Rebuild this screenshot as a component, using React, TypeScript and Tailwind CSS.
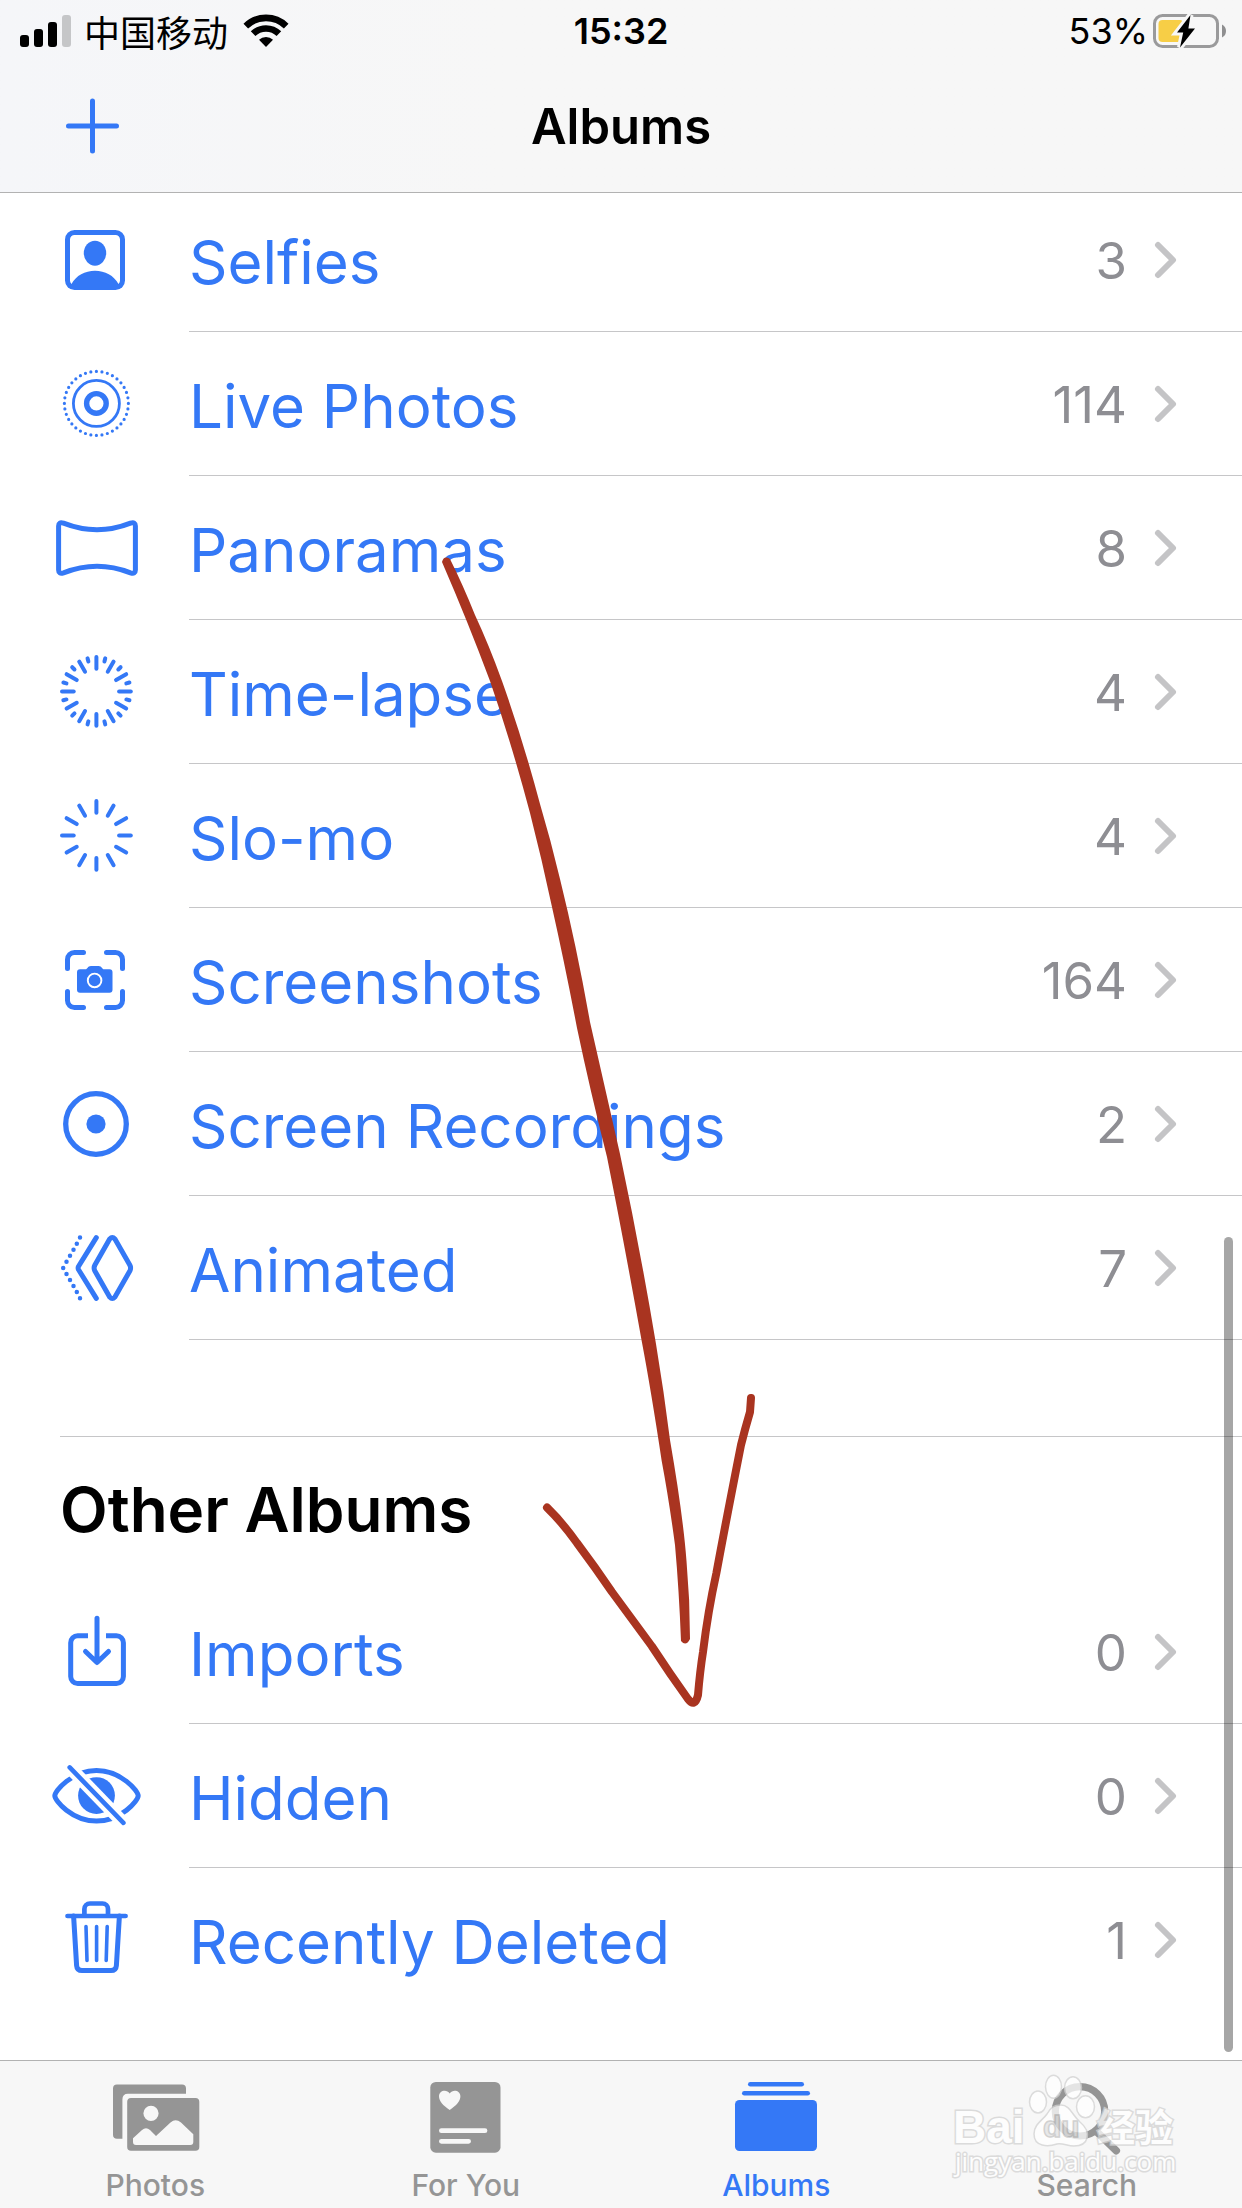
import type { ReactNode } from 'react';
import clsx from 'clsx';

interface Album {
  name: string;
  count: number;
  icon: ReactNode;
}

const LONG_TICKS = [0, 30, 60, 90, 120, 150, 180, 210, 240, 270, 300, 330];
const SHORT_TICKS = LONG_TICKS.map((angle) => angle + 15);

function Glyph({ children }: { children: ReactNode }) {
  return (
    <svg
      viewBox="0 0 96 96"
      className="size-24 shrink-0"
      fill="none"
      stroke="currentColor"
      strokeWidth="5"
      strokeLinecap="round"
      strokeLinejoin="round"
      aria-hidden="true"
    >
      {children}
    </svg>
  );
}

function Ticks({ angles, from, to }: { angles: number[]; from: number; to: number }) {
  return (
    <g strokeWidth="4">
      {angles.map((angle) => (
        <path
          key={angle}
          d={`M48.4 ${47.4 - from}V${47.4 - to}`}
          transform={`rotate(${angle} 48.4 47.4)`}
        />
      ))}
    </g>
  );
}

const mediaTypes: Album[] = [
  {
    name: 'Selfies',
    count: 3,
    icon: (
      <Glyph>
        <rect x="19.5" y="20.5" width="55" height="55" rx="7" />
        <g fill="currentColor" stroke="none">
          <ellipse cx="47" cy="41.2" rx="11.2" ry="12.5" />
          <path d="M23.5 72C28 63.5 37 58.7 47 58.7S66 63.5 70.5 72L74 76H20Z" />
        </g>
      </Glyph>
    ),
  },
  {
    name: 'Live Photos',
    count: 114,
    icon: (
      <Glyph>
        <circle cx="48.4" cy="47.4" r="32" strokeWidth="3.2" pathLength="36" strokeDasharray="0 1" />
        <circle cx="48.4" cy="47.4" r="23" strokeWidth="2.8" />
        <circle cx="48.4" cy="47.4" r="9.8" strokeWidth="5.4" />
      </Glyph>
    ),
  },
  {
    name: 'Panoramas',
    count: 8,
    icon: (
      <Glyph>
        <path d="M15.5 23.2C26 27.3 36 29.8 49 29.8S72 27.3 82.5 23.2Q87.4 21.5 87.4 26V70Q87.4 74.5 82.5 72.8C72 68.7 62 66.2 49 66.2S26 68.7 15.5 72.8Q10.6 74.5 10.6 70V26Q10.6 21.5 15.5 23.2Z" />
      </Glyph>
    ),
  },
  {
    name: 'Time-lapse',
    count: 4,
    icon: (
      <Glyph>
        <Ticks angles={LONG_TICKS} from={22.7} to={34.4} />
        <Ticks angles={SHORT_TICKS} from={31} to={34.2} />
      </Glyph>
    ),
  },
  {
    name: 'Slo-mo',
    count: 4,
    icon: (
      <Glyph>
        <Ticks angles={LONG_TICKS} from={22.7} to={34.4} />
      </Glyph>
    ),
  },
  {
    name: 'Screenshots',
    count: 164,
    icon: (
      <Glyph>
        <path d="M19.5 36.5V27.5a7 7 0 0 1 7-7H35.5M58.5 20.5H67.5a7 7 0 0 1 7 7V36.5M74.5 59.5V68.5a7 7 0 0 1-7 7H58.5M35.5 75.5H26.5a7 7 0 0 1-7-7V59.5" />
        <path
          d="M32 37.3H37.5C39.5 37.3 39.5 34 43 34H50.5C54 34 54 37.3 56 37.3H61.5a3 3 0 0 1 3 3V57.7a3 3 0 0 1-3 3H32a3 3 0 0 1-3-3V40.3a3 3 0 0 1 3-3Z"
          fill="currentColor"
          stroke="none"
        />
        <circle cx="46.6" cy="48.4" r="6.8" stroke="#fff" strokeWidth="1.9" />
      </Glyph>
    ),
  },
  {
    name: 'Screen Recordings',
    count: 2,
    icon: (
      <Glyph>
        <circle cx="48" cy="48" r="30.3" strokeWidth="5.3" />
        <circle cx="48" cy="48" r="9.6" fill="currentColor" stroke="none" />
      </Glyph>
    ),
  },
  {
    name: 'Animated',
    count: 7,
    icon: (
      <Glyph>
        <path d="M61.8 18.8Q64.3 16 66.8 18.8L81.8 45Q83.4 48 81.8 51L66.8 77.2Q64.3 80 61.8 77.2L46.9 51Q45.3 48 46.9 45Z" />
        <path d="M48.3 17.6L30.6 46.2Q29.6 48 30.6 49.8L48.3 78.4" />
        <path
          d="M32 17.6h0M28.8 23.7h0M25.5 29.8h0M22 35.8h0M18.5 41.8h0M15.2 47.9h0M18.5 54h0M22 60h0M25.5 66h0M28.8 72h0M32 78.2h0"
          strokeWidth="4.5"
        />
      </Glyph>
    ),
  },
];

const otherAlbums: Album[] = [
  {
    name: 'Imports',
    count: 0,
    icon: (
      <Glyph>
        <path
          d="M40 31.8H29.7a7 7 0 0 0-7 7V72.5a7 7 0 0 0 7 7H68.4a7 7 0 0 0 7-7V38.8a7 7 0 0 0-7-7H58"
          strokeLinecap="butt"
        />
        <path d="M49 14.2V57.5M37.5 47.5L49 58.5L60.5 47.5" />
      </Glyph>
    ),
  },
  {
    name: 'Hidden',
    count: 0,
    icon: (
      <Glyph>
        <path d="M6.8 47.8C6.8 43 24 22.5 48.5 22.5S90.2 43 90.2 47.8S73 73.1 48.5 73.1S6.8 52.6 6.8 47.8Z" />
        <circle cx="48.5" cy="47.6" r="18.4" fill="currentColor" stroke="none" />
        <path d="M21 18.7L76 75.5" stroke="#fff" strokeWidth="13" strokeLinecap="butt" />
        <path d="M21.7 19.4L75.4 74.9" strokeWidth="4.6" />
      </Glyph>
    ),
  },
  {
    name: 'Recently Deleted',
    count: 1,
    icon: (
      <Glyph>
        <path d="M19.5 24H77.6M36.4 24V17a5.5 5.5 0 0 1 5.5-5.5H54.5a5.5 5.5 0 0 1 5.5 5.5V24" strokeWidth="4.7" />
        <path d="M25.6 24L28.6 73.5Q29 78.6 34 78.6H63Q68 78.6 68.4 73.5L71.4 24" />
        <path d="M38 34.5L39 68.5M48.6 34.5V68.5M59.2 34.5L58.2 68.5" strokeWidth="3.6" />
      </Glyph>
    ),
  },
];

const tabs = [
  {
    label: 'Photos',
    icon: (
      <>
        <path d="M6 62V15.5A4 4 0 0 1 10 11.5H75A4 4 0 0 1 79 15.5V20.7H21Q15.4 20.7 15.4 26.5V65.8H10A4 4 0 0 1 6 62Z" />
        <path
          fillRule="evenodd"
          d="M24 25H88.5a3.8 3.8 0 0 1 3.8 3.8V74a3.8 3.8 0 0 1-3.8 3.8H24a3.8 3.8 0 0 1-3.8-3.8V28.8A3.8 3.8 0 0 1 24 25ZM44 32.7a7.6 7.6 0 1 0 0 15.2a7.6 7.6 0 0 0 0-15.2ZM26 65.3V69Q26 72 29 72H83.3Q86.3 72 86.3 69V61.3L74 49.5Q68.5 45 63.5 49.5L49 62.9L43 57Q39 53.5 35 57Z"
        />
      </>
    ),
  },
  {
    label: 'For You',
    icon: (
      <>
        <rect x="12.3" y="9" width="70.2" height="70.7" rx="5.5" />
        <path
          fill="#f7f7f7"
          d="M31.7 37C25 32.5 21 28 21 23.3C21 17.5 28.5 15.8 31.7 20.5C34.9 15.8 42.4 17.5 42.4 23.3C42.4 28 38.4 32.5 31.7 37Z"
        />
        <path d="M23.4 57.7H67M23.4 68.3H50.6" stroke="#f7f7f7" strokeWidth="4.8" strokeLinecap="round" />
      </>
    ),
  },
  {
    label: 'Albums',
    current: true,
    icon: (
      <>
        <rect x="7" y="27" width="82" height="51" rx="4.5" />
        <rect x="14" y="18" width="68" height="4.6" rx="2.3" />
        <rect x="20" y="9" width="56" height="4.6" rx="2.3" />
      </>
    ),
  },
  {
    label: 'Search',
    icon: (
      <g fill="none" stroke="currentColor" strokeLinecap="round">
        <circle cx="41" cy="38.3" r="24.7" strokeWidth="7.2" />
        <path d="M59 60L77.3 77.7" strokeWidth="7.5" />
      </g>
    ),
  },
];

function StatusBar() {
  return (
    <div className="grid h-15 grid-cols-3 items-center pt-0.5 text-4xl">
      <div className="flex items-center pl-5">
        <svg viewBox="0 0 52 34" className="h-[34px] w-[52px]" aria-hidden="true">
          <rect y="21" width="9" height="12" rx="3" />
          <rect x="14" y="15" width="9" height="18" rx="3" />
          <rect x="28" y="8" width="9" height="25" rx="3" />
          <rect x="42" y="1" width="9" height="32" rx="3" fill="#c5c6c8" />
        </svg>
        <span className="ml-3 font-['Noto_Sans_CJK_SC',sans-serif] leading-10">中国移动</span>
        <svg viewBox="0 0 52 40" className="ml-3 h-10 w-[52px]" aria-label="Wi-Fi">
          <g fill="none" stroke="currentColor" strokeWidth="6.6">
            <path d="M5.8 15.1A29 29 0 0 1 46.2 15.1" />
            <path d="M13.1 22.7A18.5 18.5 0 0 1 38.9 22.7" />
          </g>
          <path d="M26 36L19 28.8A10 10 0 0 1 33 28.8Z" />
        </svg>
      </div>
      <time className="text-center font-semibold">15:32</time>
      <div className="flex items-center justify-end pr-3.5">
        <span>53%</span>
        <svg viewBox="0 0 78 40" className="ml-0.5 h-10 w-[78px]" aria-label="Charging">
          <rect x="4.5" y="4.5" width="63" height="31" rx="8" fill="none" stroke="#9a9a9b" strokeWidth="3" />
          <path d="M72 13.5Q76 15.5 76 20T72 26.5Z" fill="#8f8f90" />
          <rect x="8.5" y="9" width="25" height="22" rx="4" fill="#f7ce46" />
          <path
            d="M40.5 4L27 21.5H33.2L30 36.5L45 17.5H38.4Z"
            stroke="#f7f7f7"
            strokeWidth="6"
          />
          <path d="M40.5 4L27 21.5H33.2L30 36.5L45 17.5H38.4Z" />
        </svg>
      </div>
    </div>
  );
}

function AlbumList({ albums, lastDivider = false }: { albums: Album[]; lastDivider?: boolean }) {
  return (
    <ul>
      {albums.map((album, index) => (
        <li key={album.name}>
          <a href="#album" className="flex h-36 items-center pl-12 text-[#3478f6]">
            {album.icon}
            <div
              className={clsx(
                'ml-[45px] flex h-full flex-1 items-center border-b pr-[62px]',
                lastDivider || index < albums.length - 1 ? 'border-[#c6c6c8]' : 'border-transparent',
              )}
            >
              <span className="flex-1 pt-1 text-6xl leading-none">{album.name}</span>
              <span className="pt-0.5 text-[51px] leading-none text-[#8e8e93]">{album.count}</span>
              <svg viewBox="0 0 28 40" className="ml-[25px] h-10 w-7" aria-hidden="true">
                <path
                  d="M6 5L21 20L6 35"
                  fill="none"
                  stroke="#c4c4c6"
                  strokeWidth="6"
                  strokeLinecap="round"
                  strokeLinejoin="round"
                />
              </svg>
            </div>
          </a>
        </li>
      ))}
    </ul>
  );
}

function Annotation() {
  return (
    <svg
      viewBox="435 550 330 1165"
      className="pointer-events-none absolute top-[550px] left-[435px] z-20 h-[1165px] w-[330px]"
      fill="#a93420"
      aria-hidden="true"
    >
      <path d="M442 562Q444 555 450 559Q463 585 475 615Q489 645 502 681Q523 740 540 804Q551 841 560 879Q577 948 590 1022L620 1154Q640 1248 656 1344Q664 1392 670 1440Q683 1515 686.5 1561Q690 1600 690 1639Q686 1647 681 1641Q679 1590 675 1545Q669 1500 661.7 1461Q651 1390 641.7 1341Q624 1242 607 1157Q590 1090 577 1028Q565 965 552 907Q542 860 530 813Q512 745 490 681Q468 622 442 562Z" />
      <path
        d="M547 1507.5Q562 1522 577 1543Q595 1567 612 1592L651.7 1646Q670 1674 688 1699Q695 1708 698 1695Q700 1671 703 1652Q708 1611 716.4 1573Q726 1521 741 1445Q745 1429 750 1412L751 1398"
        fill="none"
        stroke="#a93420"
        strokeWidth="8"
        strokeLinecap="round"
        strokeLinejoin="round"
      />
    </svg>
  );
}

function Watermark() {
  return (
    <svg
      viewBox="0 0 230 116"
      className="pointer-events-none absolute right-[62px] bottom-[22px] h-[116px] w-[230px] opacity-75"
      fill="#fff"
      stroke="#d2d2d2"
      strokeWidth="1.5"
      aria-hidden="true"
    >
      <g paintOrder="stroke" strokeWidth="3">
        <text x="3" y="73" className="font-['Liberation_Sans',sans-serif] text-[46px] font-bold">
          Bai
        </text>
        <text x="147" y="71" className="font-['Noto_Sans_CJK_SC',sans-serif] text-[38px] font-bold">
          经验
        </text>
        <text x="5" y="101" className="font-['Open_Sans',sans-serif] text-[26px]">
          jingyan.baidu.com
        </text>
      </g>
      <ellipse cx="88" cy="32" rx="8.5" ry="11" />
      <ellipse cx="103.5" cy="16.7" rx="8" ry="11.5" />
      <ellipse cx="123" cy="17.7" rx="8.5" ry="11" />
      <ellipse cx="135.5" cy="36.7" rx="9" ry="11" />
      <path d="M111 35C120 35 122 45 130 52C142 62 139 76 124 76C117 76 113 73 107 74C98 77 84 77 84 64C84 54 93 50 97 44C101 37 104 35 111 35Z" />
      <text
        x="93"
        y="67"
        fill="#e4e4e4"
        stroke="#c4c4c4"
        className="font-['Liberation_Sans',sans-serif] text-[30px] font-bold"
      >
        du
      </text>
    </svg>
  );
}

export default function App() {
  return (
    <div className="relative flex min-h-screen flex-col bg-white font-['Inter',sans-serif] text-black">
      <header className="relative z-10 border-b border-[#b2b2b2] bg-[#f7f7f7] bg-linear-to-r from-[#f5f6f9] to-[#f7f7f7] to-40%">
        <StatusBar />
        <div className="grid h-33 grid-cols-3 items-center">
          <button type="button" aria-label="New album" className="ml-16 size-14 text-[#3478f6]">
            <svg viewBox="0 0 56 56" className="size-14">
              <path d="M28.5 3V53M4.5 28H52.5" stroke="currentColor" strokeWidth="5" strokeLinecap="round" />
            </svg>
          </button>
          <h1 className="text-center text-[49px] leading-none font-semibold">Albums</h1>
        </div>
      </header>

      <main className="relative flex-1">
        {/* The first row is scrolled slightly under the header. */}
        <div className="-mt-[5px]">
          <AlbumList albums={mediaTypes} lastDivider />
        </div>
        <section className="mt-24">
          <h2 className="ml-15 flex h-36 items-center border-t border-[#c6c6c8] pt-0.5 text-[62px] leading-none font-semibold">
            Other Albums
          </h2>
          <AlbumList albums={otherAlbums} />
        </section>
        <div className="absolute right-[9px] bottom-2 h-[815px] w-[9px] rounded-full bg-black/35" />
      </main>

      <nav className="relative grid h-37 grid-cols-4 border-t border-[#b2b2b2] bg-[#f7f7f7]">
        {tabs.map((tab) => (
          <a
            key={tab.label}
            href="#tab"
            aria-current={tab.current ? 'page' : undefined}
            className={clsx(
              'flex flex-col items-center pt-3',
              tab.current ? 'text-[#3478f6]' : 'text-[#959595]',
            )}
          >
            <svg viewBox="0 0 96 88" className="h-22 w-24" fill="currentColor" aria-hidden="true">
              {tab.icon}
            </svg>
            <span className="text-3xl leading-12 font-medium">{tab.label}</span>
          </a>
        ))}
        <Watermark />
      </nav>

      <Annotation />
    </div>
  );
}
